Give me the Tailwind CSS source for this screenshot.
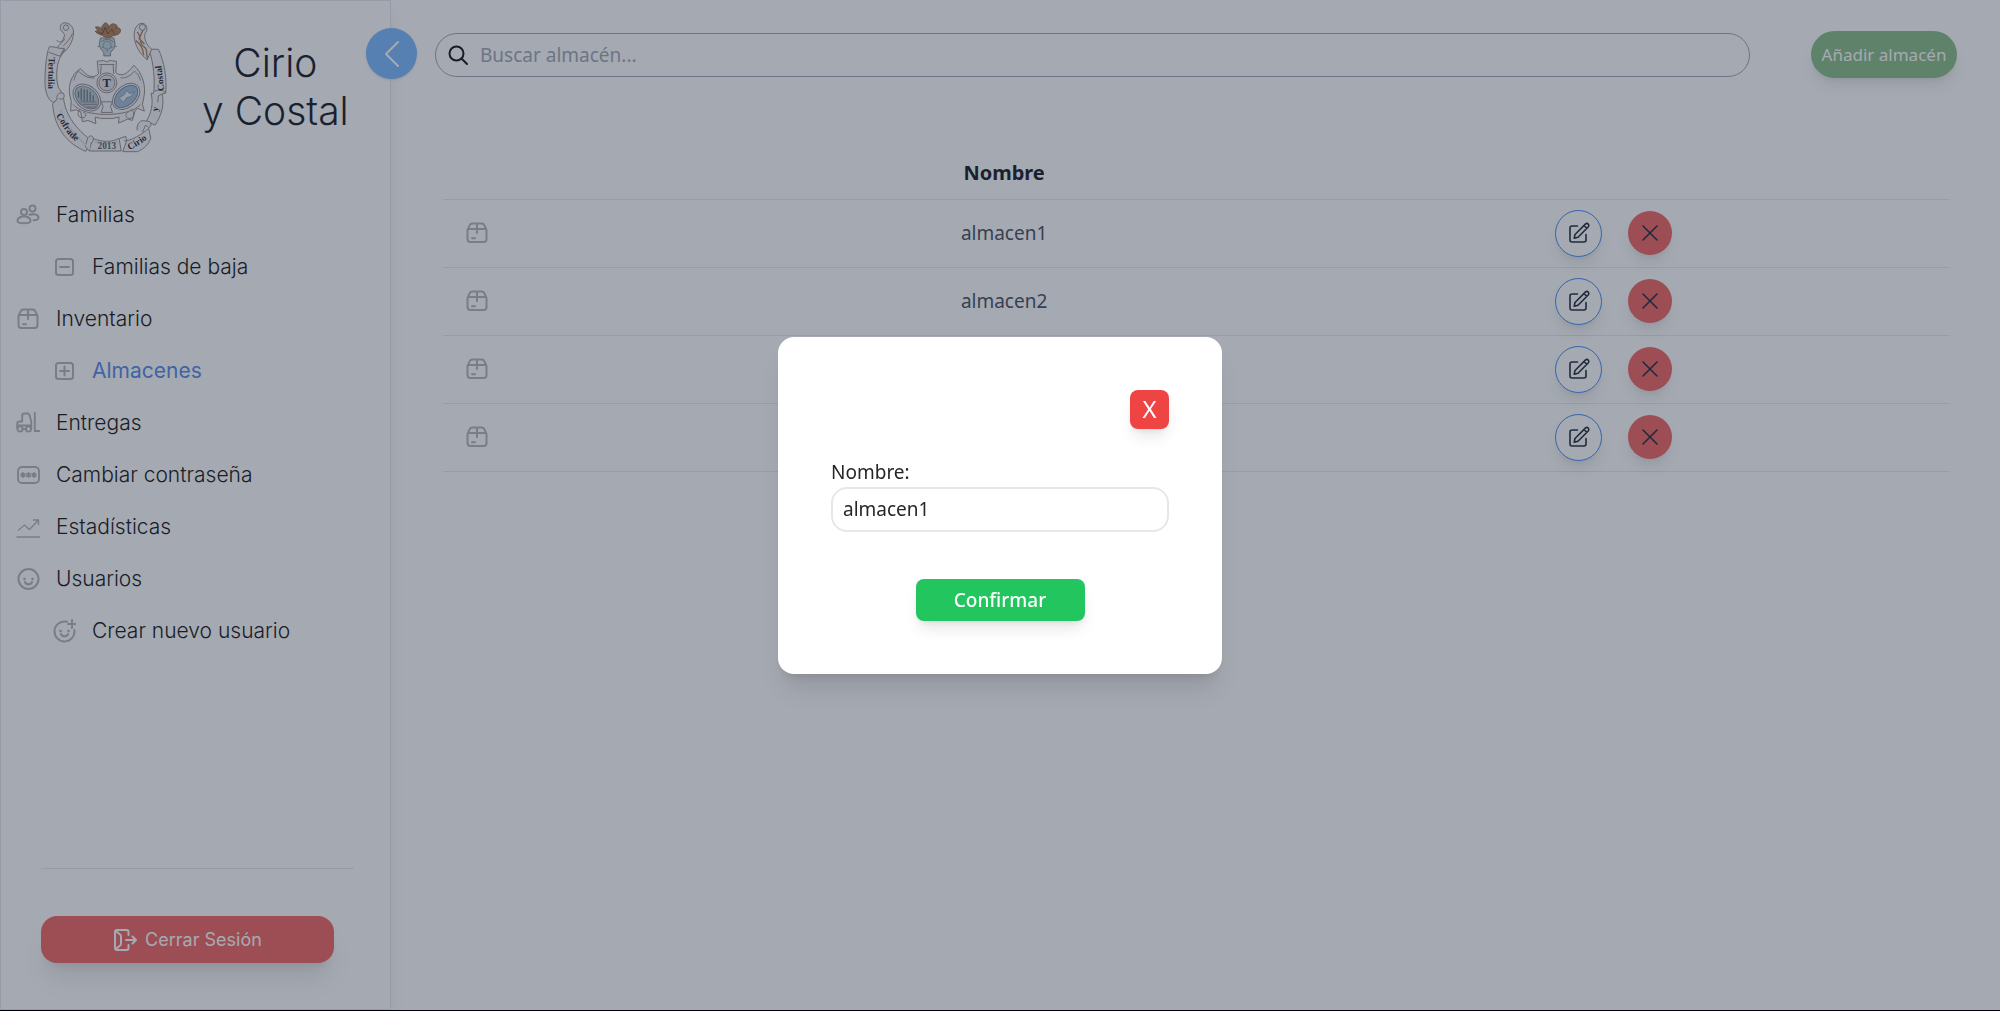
<!doctype html>
<html lang="es">

<head>
    <meta charset="UTF-8" />
    <meta name="viewport" content="width=device-width, initial-scale=1.0" />
    <title>Cirio y Costal - Almacenes</title>
    <!-- tailwindcss -->
    <script src="https://cdn.jsdelivr.net/npm/@tailwindcss/browser@4"></script>
</head>

<body class="bg-white font-['Noto_Sans',sans-serif] text-[19px] leading-[30px] text-black">

    <!-- Icons -->
    <svg class="hidden">
        <symbol id="iconBox" viewBox="0 0 24 24">
            <path d="M2.500 9v9a3 3 0 0 0 3 3h13a3 3 0 0 0 3-3V9l-2-4.300A3 3 0 0 0 16.800 2.500H7.200a3 3 0 0 0-2.700 2.200zM3 8h18M12 2.500V12M7 17.300h3" />
        </symbol>
        <symbol id="iconEdit" viewBox="0 0 24 24">
            <path d="M10.500 5H5a2 2 0 0 0-2 2v12a2 2 0 0 0 2 2h12a2 2 0 0 0 2-2v-5.500" />
            <path d="M8 13.500L18.600 2.900a2 2 0 0 1 2.800 2.800L11 16.200 7.200 17.300zM17 4.500l2.800 2.800" />
        </symbol>
        <symbol id="iconClose" viewBox="0 0 24 24">
            <path d="M5 5l14 14M19 5L5 19" />
        </symbol>
    </svg>

    <div id="containerMain" class="flex min-h-screen border-b border-black">

        <!-- Sidebar -->
        <aside id="sidebar" class="relative flex flex-col w-[391px] shrink-0 border border-slate-200 shadow-lg font-['Inter',sans-serif]">
            <button id="toggleSidebarBtn" aria-label="Ocultar menú"
                class="absolute -right-[27px] top-[27px] flex items-center justify-center size-[51px] rounded-full bg-[#6db4ff] text-white shadow">
                <svg class="size-7" viewBox="0 0 28 28" fill="none" stroke="currentColor" stroke-width="2" stroke-linecap="round" stroke-linejoin="round">
                    <path d="M20 2L8 14l12 12" />
                </svg>
            </button>

            <!-- Logo -->
            <div class="flex items-center gap-8 pl-[42px] pt-[19px]">
                <svg class="w-[127px] h-[133px]" viewBox="40 30 380 400" fill="none" stroke="#8f857f" stroke-width="3" stroke-linejoin="round">
                    <!-- ribbon -->
                    <g fill="#f3f3f8">
                        <path d="M91 58c-2-14 6-22 18-19 14 3 22 14 22 30-2 28-16 50-40 67l-20-16c16-10 30-28 33-46z" />
                        <circle cx="108" cy="53" r="8" />
                        <path d="M57 112l48 6-16 28c-10 24-12 62-3 88l14 20-30 24c-18-8-26-36-25-70 1-40 4-70 12-96z" />
                        <path d="M57 112c10-6 28 6 46 3l-13 24-34-12" />
                        <path d="M68 282l32-32c0 46 22 96 84 142l-16 33c-56-22-96-72-100-143z" />
                        <path d="M82 268c-6-14 12-26 20-14 4 9-6 18-14 12" />
                        <path d="M188 386c30 12 58 12 80 0l6 38H178z" />
                        <path d="M178 424l-12-14 8-26c8-10 18-6 16 8l-8 12" />
                        <path d="M270 386l18-6 3 12-12 34h44c18-7 34-22 40-40l-6-30c-24 20-50 36-74 38" />
                        <path d="M364 250l34 4c6 34-4 66-22 92l-26-12c14-22 22-52 14-84z" />
                        <path d="M322 362c-2-20 10-34 26-28 16-2 22 14 8 20l-8-8-10 22" />
                        <path d="M358 118l28 0c18 38 26 86 22 132l-36 4c4-50 0-90-14-136z" />
                        <path d="M370 252c0-14 30-14 38-4l-22 10-2 20" />
                        <path d="M340 40c-20-2-30 22-26 46 4 26 18 46 38 64l14-32c-18-14-24-34-20-48 10-10 6-26-6-30z" />
                        <circle cx="338" cy="52" r="9" />
                    </g>
                    <path d="M80 92c14 8 22 4 24-6M128 70c-6 16-18 28-28 38" stroke="#a9855f" />
                    <path d="M322 66c14 10 4 34 20 44s4 22 12 36M318 92c12 8 22 20 24 44M340 60l-12 26 16 16" stroke="#a9713e" stroke-width="4" />
                    <path d="M92 300c8 34 36 70 76 106M196 396c24 8 46 8 68 0" stroke="#dcdbe4" stroke-width="5" />
                    <!-- crest top -->
                    <path d="M226 82c-10-10-24-8-30-18 10 2 6-8 0-12 14-4 20 4 22 10-6-12 2-20 10-24 8 4 10 12 6 20 4-14 14-20 24-14 8 4 2 10-2 10 12-4 20 4 14 14-6 10-20 4-30 16z" fill="#b0764a" stroke="#7d563a" />
                    <path d="M206 66l12 6 8-20 8 20 12-14 8 14" stroke="#5f402c" />
                    <path d="M212 84h40l4 18-4 14-10 12v10h-20v-10l-10-12-4-14z" fill="#c3d0da" stroke="#7a7f86" />
                    <path d="M214 96c10-10 26-10 36 0M232 98v28M216 112h32M208 110h-5M256 110h5" stroke="#6d8494" />
                    <circle cx="232" cy="106" r="12" fill="#b7d0d8" stroke="#8aa0ac" />
                    <!-- shield -->
                    <path d="M202 154l20-2 8 4 10-4 20 2-2 34c16 14 34 6 54-22 26 24 38 62 30 98l-4 20 6 20-20-8-8 6-8 30-14-4-28 12 2-18-18 4h-38l-16-4 2 20-24-10-16 4-6-30-14-6-16 4 2-30c-14-40-2-80 28-98 20 24 36 32 54 16z" fill="#f3f3f7" />
                    <path d="M208 164h46M214 166l-2 26M250 166l2 26M132 212c4-16 8-22 14-28 14 14 30 22 48 20M332 212c-4-16-10-22-18-28-12 14-26 22-42 20M130 284c30 40 170 40 202 0M214 276h34l-6 14 6 18h-34l6-18zM150 300c-10 6-6 26 8 24s12-16 2-16M302 300c14 2 14 26-2 26s-14-18-4-18" />
                    <circle cx="231" cy="219" r="24" fill="#dedfe8" />
                    <circle cx="231" cy="219" r="30" />
                    <ellipse cx="171" cy="263" rx="47" ry="34" transform="rotate(42 171 263)" fill="#fafaff" />
                    <ellipse cx="171" cy="263" rx="41" ry="28" transform="rotate(42 171 263)" fill="#b7c4d0" stroke="#77808c" />
                    <path d="M146 244v20M154 236v36M163 238v36M172 240v36M181 246v30M190 256v22" stroke="#5f6f7f" stroke-width="4" />
                    <path d="M152 276h48M158 284h44M170 292h30" stroke="#858d98" stroke-width="4" />
                    <ellipse cx="289" cy="260" rx="47" ry="32" transform="rotate(-42 289 260)" fill="#fafaff" />
                    <ellipse cx="289" cy="260" rx="41" ry="26" transform="rotate(-42 289 260)" fill="#9fb9d6" stroke="#64809f" />
                    <path d="M268 264l16-10 6-12 10 10 14-8-10 16-14 4-8 14-8-8z" fill="#e8edf3" stroke="#8798ab" />
                    <!-- lettering -->
                    <g fill="#15181d" stroke="none" font-family="Liberation Serif, serif" font-weight="bold" font-size="28">
                        <text x="218" y="232" font-size="38">T</text>
                        <text transform="translate(56 142) rotate(91)">Tertulia</text>
                        <text transform="translate(77 318) rotate(56)">Cofra</text>
                        <text transform="translate(117 377) rotate(42)">de</text>
                        <text x="203" y="417" fill="#46555f">2013</text>
                        <text transform="translate(300 422) rotate(-32)">Cirio</text>
                        <text transform="translate(384 306) rotate(-82)">y</text>
                        <text transform="translate(404 242) rotate(-97)">Costal</text>
                    </g>
                </svg>
                <h1 class="text-[39px] leading-[48px] font-light text-center text-gray-950">Cirio<br>y Costal</h1>
            </div>

            <!-- Menu -->
            <nav id="menu" class="flex flex-col mt-[36px] pl-[15px] text-[21px] font-light">
                <a href="#" class="flex items-center gap-4 h-[52px]">
                    <svg class="size-6 text-[#b0b0b4]" viewBox="0 0 24 24" fill="none" stroke="currentColor" stroke-width="2" stroke-linecap="round">
                        <circle cx="8" cy="9" r="3" />
                        <circle cx="16.500" cy="5.500" r="3" />
                        <path d="M1.500 18c0-3 3-4.500 6.500-4.500s6.500 1.500 6.500 4.500-13 3-13 0zM13.500 11.800c4-1.500 9-.3 9 2.700 0 2-2.500 2.700-5 2.700" />
                    </svg>
                    Familias
                </a>
                <a href="#" class="flex items-center gap-4 h-[52px] pl-9">
                    <svg class="size-6 text-[#b0b0b4]" viewBox="0 0 24 24" fill="none" stroke="currentColor" stroke-width="2" stroke-linecap="round">
                        <rect x="4" y="4" width="17" height="16" rx="2.500" />
                        <path d="M8 12h9" />
                    </svg>
                    Familias de baja
                </a>
                <a href="#" class="flex items-center gap-4 h-[52px]">
                    <svg class="size-6 text-[#b0b0b4]" fill="none" stroke="currentColor" stroke-width="2" stroke-linecap="round" stroke-linejoin="round"><use href="#iconBox" /></svg>
                    Inventario
                </a>
                <a href="#" class="flex items-center gap-4 h-[52px] pl-9 font-normal text-[#4a7fe8]">
                    <svg class="size-6 text-[#b0b0b4]" viewBox="0 0 24 24" fill="none" stroke="currentColor" stroke-width="2" stroke-linecap="round">
                        <rect x="4" y="4" width="17" height="16" rx="2.500" />
                        <path d="M8 12h9M12.500 7.500v9" />
                    </svg>
                    Almacenes
                </a>
                <a href="#" class="flex items-center gap-4 h-[52px]">
                    <svg class="size-6 text-[#b0b0b4]" viewBox="0 0 24 24" fill="none" stroke="currentColor" stroke-width="1.900" stroke-linecap="round" stroke-linejoin="round">
                        <circle cx="4" cy="18" r="2.600" />
                        <circle cx="12.500" cy="18" r="2.600" />
                        <path d="M6.600 18h3.300M1.200 17v-4a2.500 2.500 0 0 1 2.500-2.500h2.500M1.500 14.500h13.700M6.200 10.500V4.500A2 2 0 0 1 8.200 2.500h3a2.500 2.500 0 0 1 2.400 1.700l1.700 6.300V18M18.800 2v18h4.700" />
                    </svg>
                    Entregas
                </a>
                <a href="#" class="flex items-center gap-4 h-[52px]">
                    <svg class="size-6 text-[#b0b0b4]" viewBox="0 0 24 24" fill="none" stroke="currentColor" stroke-width="1.900" stroke-linecap="round">
                        <rect x="2" y="4" width="21" height="16" rx="4" />
                        <path d="M7 10v4M5.300 11l3.400 2M8.700 11l-3.400 2M12.500 10v4M10.800 11l3.400 2M14.200 11l-3.400 2M18 10v4M16.300 11l3.400 2M19.700 11l-3.400 2" />
                    </svg>
                    Cambiar contraseña
                </a>
                <a href="#" class="flex items-center gap-4 h-[52px]">
                    <svg class="size-6 text-[#b0b0b4]" viewBox="0 0 24 24" fill="none" stroke="currentColor" stroke-width="1.300">
                        <path d="M2 15.500l6.500-5.500 5 4.500L22.500 5M17 5h5.500v5M.500 22h23.500" />
                    </svg>
                    Estadísticas
                </a>
                <a href="#" class="flex items-center gap-4 h-[52px]">
                    <svg class="size-6 text-[#b0b0b4]" viewBox="0 0 24 24" fill="none" stroke="currentColor" stroke-width="2" stroke-linecap="round">
                        <circle cx="12.500" cy="12" r="10" />
                        <path d="M9 15c.5 3 6.500 3 7 0" />
                        <path d="M8.500 12h.1M16.500 12h.1" stroke-width="2.600" />
                    </svg>
                    Usuarios
                </a>
                <a href="#" class="flex items-center gap-4 h-[52px] pl-9">
                    <svg class="size-6 text-[#b0b0b4]" viewBox="0 0 24 24" fill="none" stroke="currentColor" stroke-width="2" stroke-linecap="round">
                        <path d="M15 2.800a10 10 0 1 0 7.400 8.200M20 1v8M16 5h8" />
                        <path d="M9 15c.5 3 6.500 3 7 0" />
                        <path d="M8.500 12h.1M16.500 12h.1" stroke-width="2.600" />
                    </svg>
                    Crear nuevo usuario
                </a>
            </nav>

            <!-- Logout -->
            <div class="mt-auto pl-10 pr-9 pb-[46px]">
                <hr class="border-slate-200 mb-[47px]">
                <button id="logoutBtn"
                    class="flex items-center justify-center gap-2 w-[293px] h-[47px] rounded-2xl bg-[#f05957] text-white text-[18px] shadow-xl">
                    <svg class="size-6" viewBox="0 0 24 24" fill="none" stroke="currentColor" stroke-width="2" stroke-linecap="round" stroke-linejoin="round">
                        <path d="M15.500 7V4a2 2 0 0 0-2-2H4a2 2 0 0 0-2 2v16a2 2 0 0 0 2 2h9.500a2 2 0 0 0 2-2v-3M3 3l4 3.500a2 2 0 0 1 1 1.500v8a2 2 0 0 1-1 1.500L3 21M13 12h10M19.500 8.500L23 12l-3.500 3.500" />
                    </svg>
                    Cerrar Sesión
                </button>
            </div>
        </aside>
        <!-- //END OF sidebar -->

        <main class="flex-1 pl-11 pr-[43px] pt-[31px]">
            <!-- Search -->
            <div id="divSearch" class="flex items-center gap-[61px]">
                <div class="flex items-center flex-1 gap-3 h-11 px-3 border border-gray-400 rounded-full">
                    <label for="searchInput" aria-label="Buscar">
                        <svg class="size-5" viewBox="0 0 20 20" fill="none" stroke="currentColor" stroke-width="2" stroke-linecap="round">
                            <circle cx="8.500" cy="8.500" r="7" />
                            <path d="M13.500 13.500L19 19" />
                        </svg>
                    </label>
                    <input type="text" id="searchInput" class="flex-1 bg-transparent outline-none placeholder:text-gray-400" placeholder="Buscar almacén...">
                </div>
                <button id="addAlmacenBtn" class="h-[47px] w-[146px] rounded-full bg-[#7fb87f] text-white text-[17px] whitespace-nowrap shadow-lg">
                    Añadir almacén
                </button>
            </div>

            <!-- Table: Almacenes -->
            <div class="mt-[70px] mx-2">
                <table id="tableAlmacenes" class="w-full table-fixed text-center text-gray-700">
                    <colgroup>
                        <col class="w-[68px]">
                        <col>
                        <col class="w-[30%]">
                    </colgroup>
                    <thead class="text-[20px] text-gray-950">
                        <tr class="h-[51px] border-b border-gray-200">
                            <th></th>
                            <th>Nombre</th>
                            <th></th>
                        </tr>
                    </thead>
                    <tbody id="rowsAlmacenes">
                        <!-- rows are cloned from rowTemplate -->
                    </tbody>
                </table>
            </div>
        </main>
    </div>
    <!-- //END OF containerMain -->

    <template id="rowTemplate">
        <tr class="border-b border-gray-200">
            <td>
                <svg class="size-6 mx-auto text-[#b0b0b4]" fill="none" stroke="currentColor" stroke-width="2" stroke-linecap="round" stroke-linejoin="round"><use href="#iconBox" /></svg>
            </td>
            <td class="nombre"></td>
            <td class="h-[68px] pl-[58px]">
                <div class="flex items-center gap-[26px]">
                    <button aria-label="Editar" class="flex items-center justify-center size-[47px] rounded-full border border-blue-500 text-gray-900 shadow-lg">
                        <svg class="size-6" fill="none" stroke="currentColor" stroke-width="1.600" stroke-linecap="round" stroke-linejoin="round"><use href="#iconEdit" /></svg>
                    </button>
                    <button aria-label="Eliminar" class="flex items-center justify-center size-11 rounded-full bg-[#f05957] text-gray-900 shadow-lg">
                        <svg class="size-6" fill="none" stroke="currentColor" stroke-width="1.600" stroke-linecap="round"><use href="#iconClose" /></svg>
                    </button>
                </div>
            </td>
        </tr>
    </template>

    <!-- EDIT MODAL -->
    <div id="editModal" class="fixed inset-x-0 top-0 bottom-px z-50 flex items-center justify-center bg-[#374151]/45">
        <form class="flex flex-col w-[444px] rounded-2xl bg-white px-[53px] py-[53px] shadow-xl text-neutral-800">
            <button type="button" id="closeModalBtn" class="self-end size-[39px] rounded-lg bg-[#ef4444] text-white text-[24px] leading-none shadow-lg">X</button>
            <label for="nombreInput" class="mt-7">Nombre:</label>
            <input type="text" id="nombreInput" value="almacen1" class="h-[45px] px-[10px] border-2 border-gray-200 rounded-2xl outline-none">
            <button type="button" id="confirmBtn" class="self-center mt-[47px] w-[169px] h-[42px] rounded-lg bg-[#22c55e] text-white font-medium shadow-lg">Confirmar</button>
        </form>
    </div>
    <!-- //END OF editModal -->

    <script>
        const almacenes = ["almacen1", "almacen2", "almacen3", "almacen4"];
        const template = document.getElementById("rowTemplate");
        almacenes.forEach((nombre) => {
            const row = template.content.cloneNode(true);
            row.querySelector(".nombre").textContent = nombre;
            document.getElementById("rowsAlmacenes").appendChild(row);
        });
    </script>
</body>

</html>
